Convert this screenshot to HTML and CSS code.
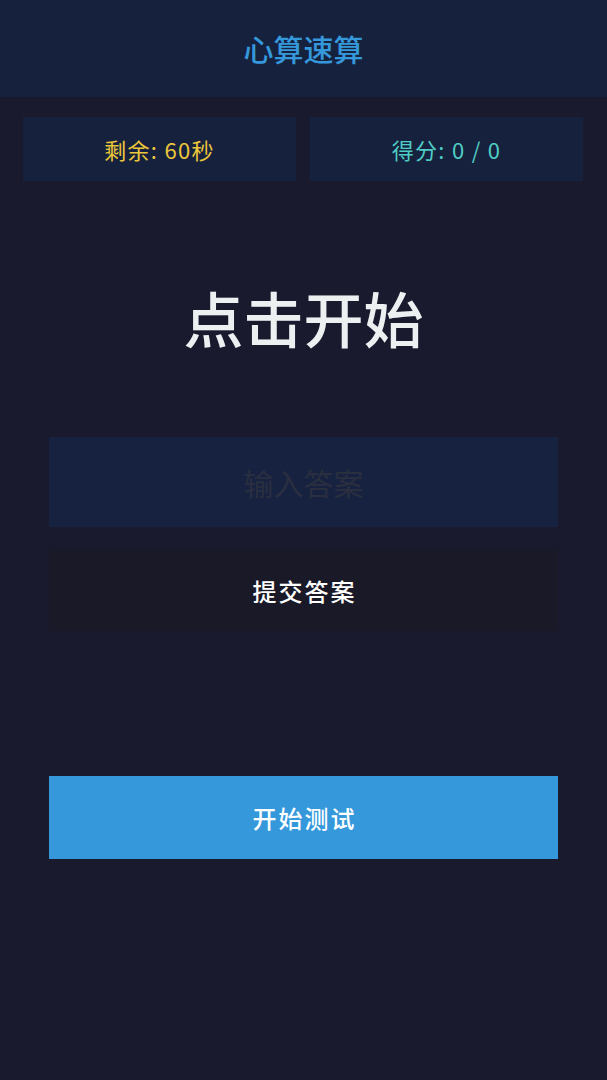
FILE: index.html
```html
<!DOCTYPE html>
<html lang="zh-CN">
<head>
<meta charset="utf-8">
<title>心算速算</title>
<link rel="stylesheet" href="styles.css">
</head>
<body>
<header class="top-bar">
  <h1 class="app-title">心算速算</h1>
</header>
<section class="stats">
  <div class="stat-card stat-time">剩余: 60秒</div>
  <div class="stat-card stat-score">得分: 0 / 0</div>
</section>
<main class="game">
  <div class="question">点击开始</div>
  <input class="answer-input" type="text" placeholder="输入答案">
  <button class="btn btn-submit">提交答案</button>
  <button class="btn btn-start">开始测试</button>
</main>
</body>
</html>
```

FILE: styles.css
```css
html, body {
  margin: 0;
  padding: 0;
  background: #1a1a2e;
  font-family: "Noto Sans CJK SC", "Noto Sans", sans-serif;
  height: 100%;
}

.top-bar {
  height: 97px;
  background: #16213e;
  display: flex;
  align-items: center;
  justify-content: center;
}

.app-title {
  margin: 0;
  font-size: 30px;
  font-weight: 500;
  color: #3498db;
  line-height: 1;
  padding-bottom: 2px;
}

.stats {
  display: flex;
  gap: 14px;
  padding: 20px 24px 0 23px;
}

.stat-card {
  flex: 1;
  height: 64px;
  background: #16213e;
  display: flex;
  align-items: center;
  justify-content: center;
  font-size: 22px;
  letter-spacing: 1.3px;
}

.stat-time {
  color: #ecc73a;
}

.stat-score {
  color: #4ecdc4;
}

.game {
  display: flex;
  flex-direction: column;
  align-items: center;
}

.question {
  margin-top: 100px;
  font-size: 60px;
  line-height: 72px;
  font-weight: 500;
  color: #ecf0f1;
}

.answer-input {
  box-sizing: border-box;
  margin-top: 84px;
  width: 509px;
  height: 90px;
  border: none;
  outline: none;
  background: #172240;
  color: #ecf0f1;
  font-family: inherit;
  font-size: 30px;
  text-align: center;
  padding: 0;
}

.answer-input::placeholder {
  color: #2a2f40;
}

.btn {
  box-sizing: border-box;
  width: 509px;
  border: none;
  font-family: inherit;
  font-size: 24px;
  font-weight: 500;
  color: #ffffff;
  letter-spacing: 2px;
  padding: 0 0 0 2px;
}

.btn-submit {
  margin-top: 22px;
  height: 82px;
  background: #191927;
}

.btn-start {
  margin-top: 145px;
  height: 83px;
  background: #3498db;
}
```
